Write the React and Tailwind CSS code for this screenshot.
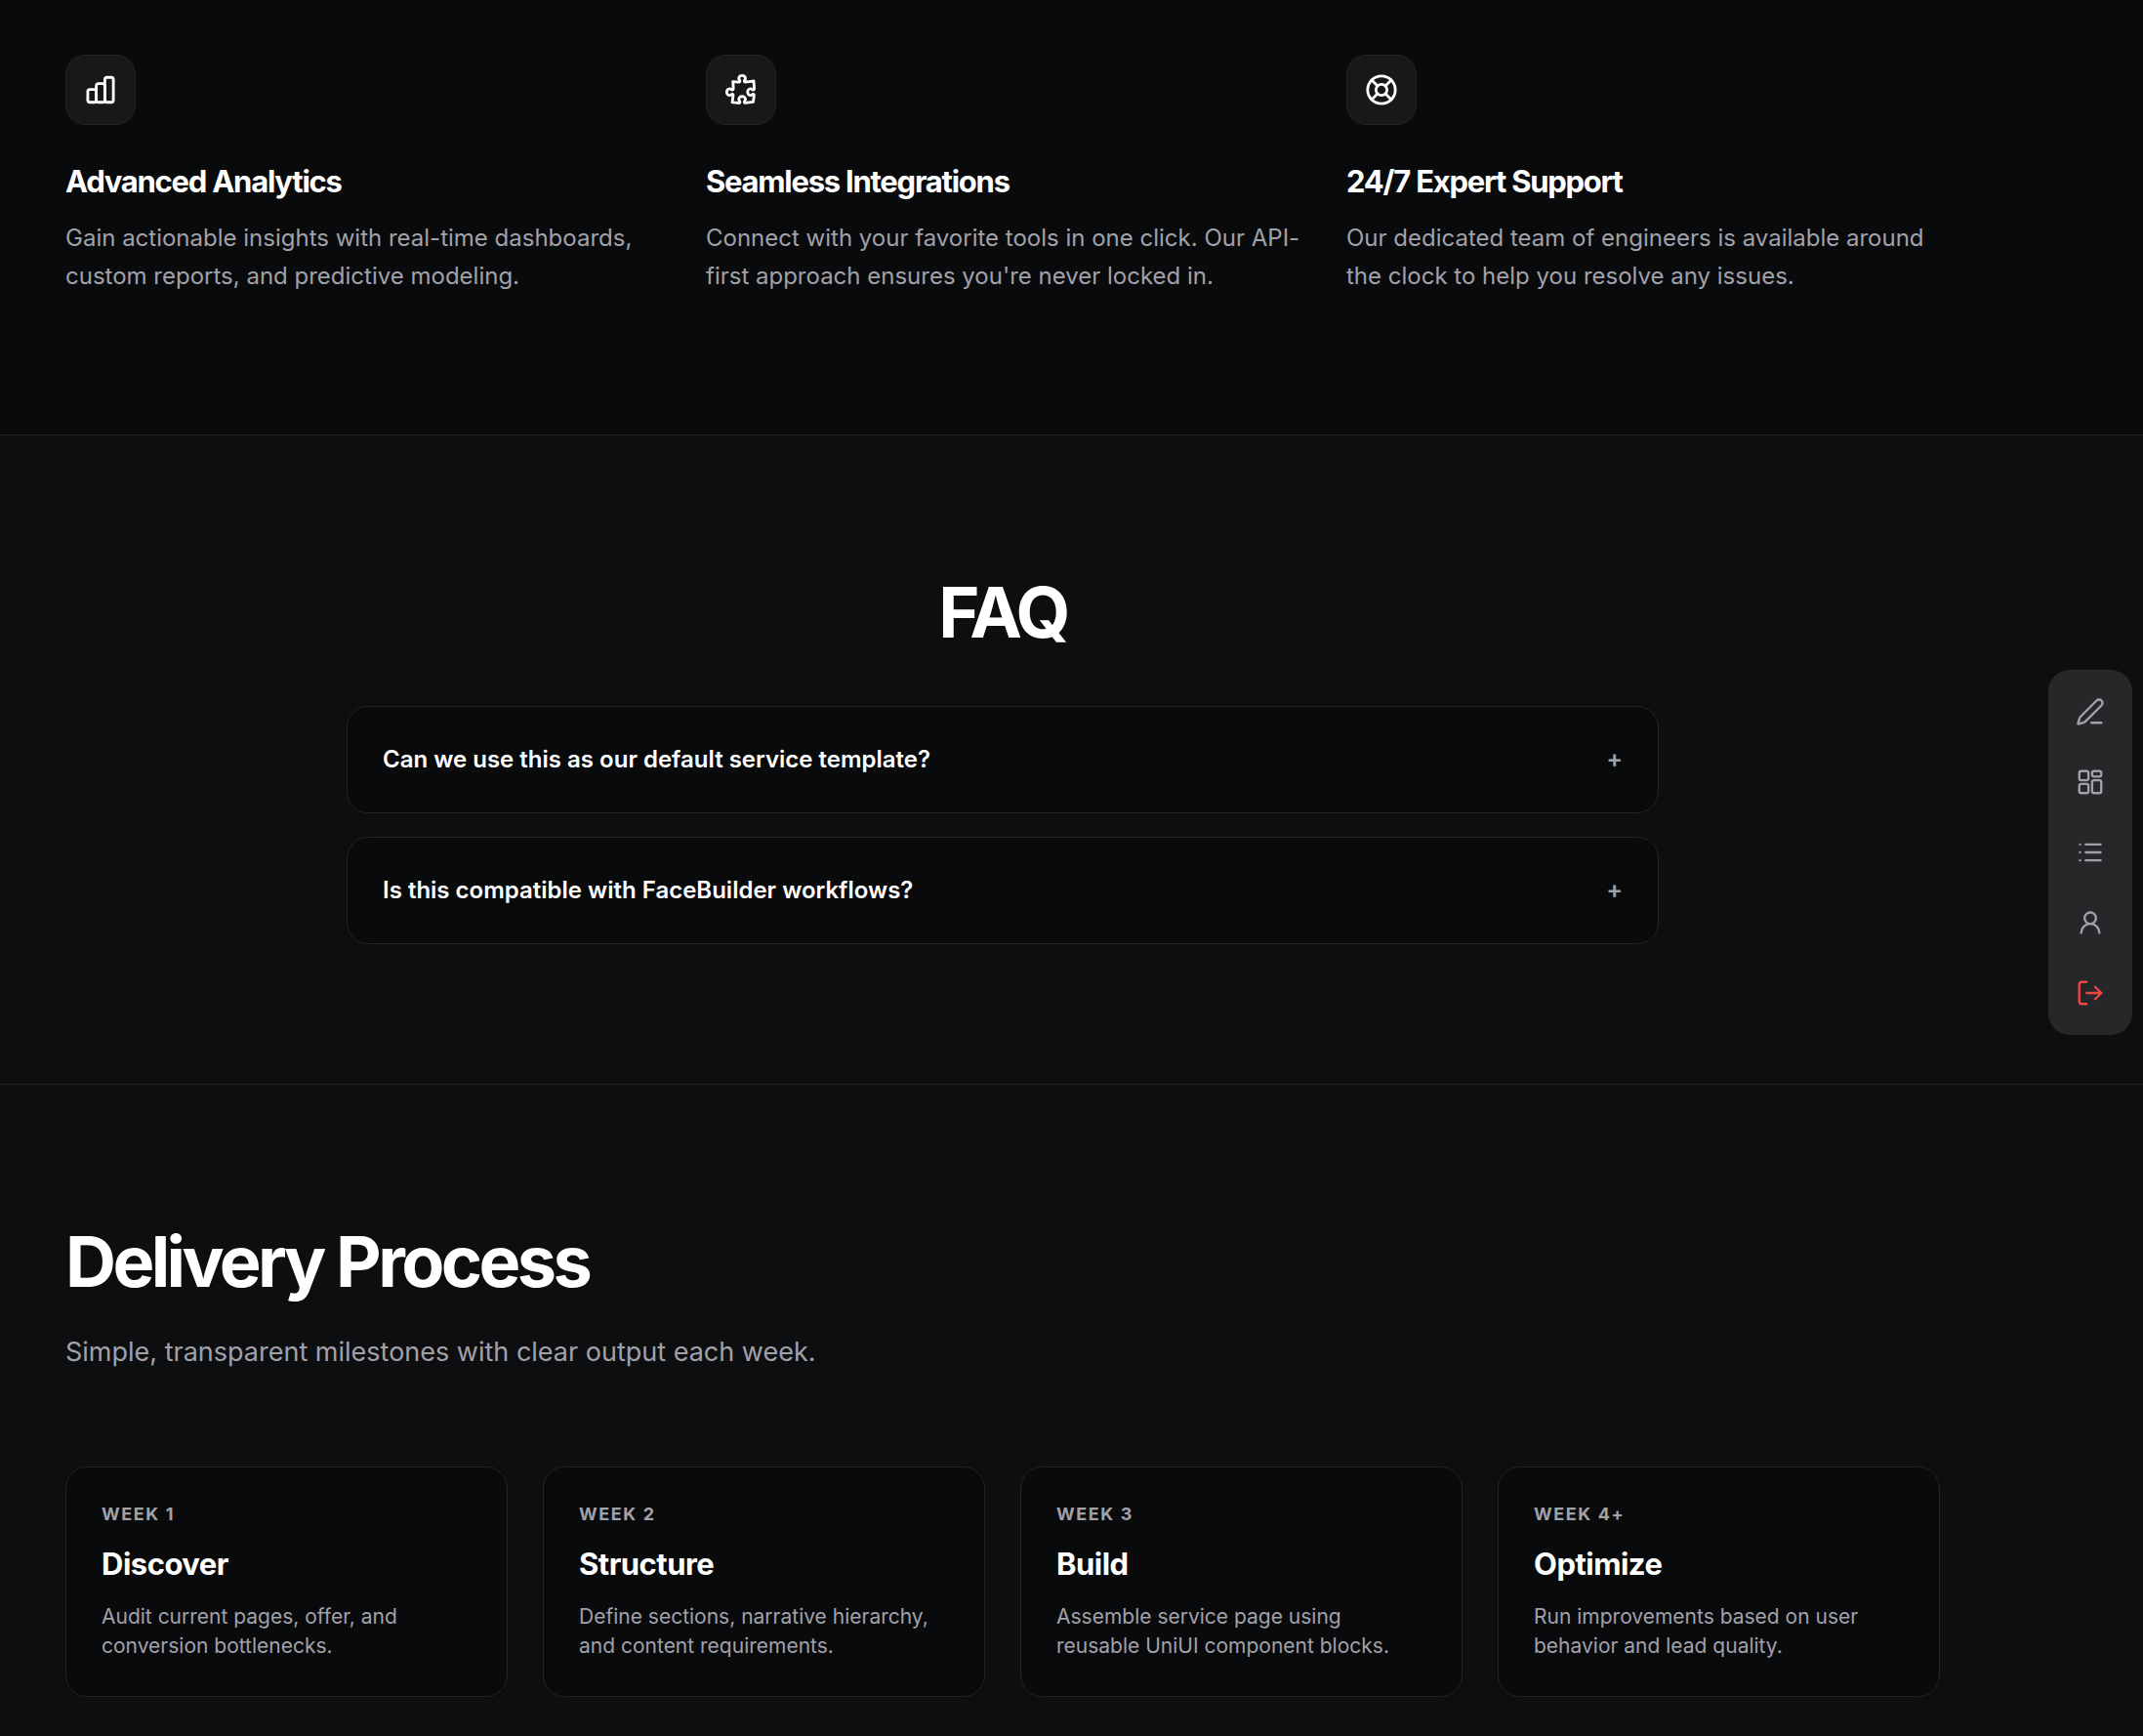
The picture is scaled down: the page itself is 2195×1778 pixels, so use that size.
import React from 'react';
import { LifeBuoy, List, LogOut, PenLine, UserRound } from 'lucide-react';
import { HiOutlinePuzzlePiece } from 'react-icons/hi2';

const BarsIcon = () => (
  <svg width="34" height="34" viewBox="0 0 24 24" fill="none" stroke="currentColor" strokeWidth="2">
    <rect x="2.75" y="11.7" width="6.15" height="9.3" rx="1.6" />
    <rect x="8.9" y="7.5" width="6.2" height="13.5" rx="1.6" />
    <rect x="15.1" y="3" width="6.15" height="18" rx="1.6" />
  </svg>
);

const WidgetsIcon = () => (
  <svg width="30" height="30" viewBox="0 0 24 24" fill="none" stroke="currentColor" strokeWidth="1.9">
    <rect x="3" y="3" width="7.5" height="7.5" rx="1.5" />
    <rect x="3" y="13.5" width="7.5" height="7.5" rx="1.5" />
    <rect x="13.5" y="3" width="7.5" height="4.5" rx="1.5" />
    <rect x="13.5" y="10.5" width="7.5" height="10.5" rx="1.5" />
  </svg>
);

const features = [
  {
    icon: <BarsIcon />,
    title: 'Advanced Analytics',
    text: 'Gain actionable insights with real-time dashboards, custom reports, and predictive modeling.',
  },
  {
    icon: <HiOutlinePuzzlePiece size={36} strokeWidth={1.9} />,
    title: 'Seamless Integrations',
    text: "Connect with your favorite tools in one click. Our API-first approach ensures you're never locked in.",
  },
  {
    icon: <LifeBuoy size={34} strokeWidth={2} />,
    title: '24/7 Expert Support',
    text: 'Our dedicated team of engineers is available around the clock to help you resolve any issues.',
  },
];

const faqs = [
  'Can we use this as our default service template?',
  'Is this compatible with FaceBuilder workflows?',
];

const steps = [
  { week: 'WEEK 1', title: 'Discover', text: 'Audit current pages, offer, and conversion bottlenecks.' },
  { week: 'WEEK 2', title: 'Structure', text: 'Define sections, narrative hierarchy, and content requirements.' },
  { week: 'WEEK 3', title: 'Build', text: 'Assemble service page using reusable UniUI component blocks.' },
  { week: 'WEEK 4+', title: 'Optimize', text: 'Run improvements based on user behavior and lead quality.' },
];

const dock = [
  { icon: <PenLine size={30} strokeWidth={1.9} />, color: 'text-[#a1a1aa]' },
  { icon: <WidgetsIcon />, color: 'text-[#a1a1aa]' },
  { icon: <List size={28} strokeWidth={2} />, color: 'text-[#a1a1aa]' },
  { icon: <UserRound size={28} strokeWidth={2} />, color: 'text-[#a1a1aa]' },
  { icon: <LogOut size={30} strokeWidth={1.9} />, color: 'text-[#ef4444]' },
];

const App = () => {
  return (
    <div className="relative h-[1778px] overflow-hidden bg-[#0d0e10] font-['Inter',sans-serif] text-white">
      {/* Features */}
      <section className="h-[446px] border-b border-[#222326] bg-[#090a0c] px-[67px] pt-[56px]">
        <div className="grid w-[1920px] grid-cols-3 gap-[48px]">
          {features.map((item) => (
            <div key={item.title}>
              <div className="flex h-[72px] w-[72px] items-center justify-center rounded-[20px] border border-[#222326] bg-[#18181b]">
                {item.icon}
              </div>
              <h3 className="mt-[35px] text-[31px] leading-[45px] font-bold tracking-[-1.25px]">
                {item.title}
              </h3>
              <p className="mt-[16px] w-[612px] text-[24px] leading-[39px] text-[#a1a1aa]">{item.text}</p>
            </div>
          ))}
        </div>
      </section>

      {/* FAQ */}
      <section className="h-[665px] border-b border-[#222326] px-[67px] pt-[139px]">
        <div className="w-[1920px]">
          <h2 className="text-center text-[72px] leading-[84px] font-bold tracking-[-3.6px]">FAQ</h2>
          <div className="mx-auto mt-[54px] flex w-[1344px] flex-col gap-[24px]">
            {faqs.map((q) => (
              <div
                key={q}
                className="flex h-[110px] items-center justify-between rounded-[22px] border border-[#222326] bg-[#090a0c] px-[36px]"
              >
                <span className="text-[24px] font-semibold">{q}</span>
                <span className="text-[25px] font-semibold text-[#a1a1aa]">+</span>
              </div>
            ))}
          </div>
        </div>
      </section>

      {/* Delivery process */}
      <section className="px-[67px] pt-[139px]">
        <h2 className="text-[72px] leading-[84px] font-bold tracking-[-3.6px]">Delivery Process</h2>
        <p className="mt-[30px] text-[27px] leading-[42px] text-[#a1a1aa]">
          Simple, transparent milestones with clear output each week.
        </p>
        <div className="mt-[96px] grid w-[1920px] grid-cols-4 gap-[36px]">
          {steps.map((step) => (
            <div key={step.week} className="h-[236px] rounded-[22px] border border-[#222326] bg-[#090a0c] px-[36px] pt-[34px]">
              <div className="text-[18px] leading-[28px] font-bold tracking-[1.6px] text-[#a1a1aa]">{step.week}</div>
              <h3 className="mt-[14px] text-[31px] leading-[45px] font-bold tracking-[-0.5px]">{step.title}</h3>
              <p className="mt-[16.5px] text-[21px] leading-[30.8px] text-[#a1a1aa]">{step.text}</p>
            </div>
          ))}
        </div>
      </section>

      {/* Floating dock */}
      <div className="absolute top-[686px] right-[11px] flex w-[86px] flex-col rounded-[22px] bg-[#27272a] py-[7px]">
        {dock.map((item, i) => (
          <div key={i} className={`flex h-[72px] items-center justify-center ${item.color}`}>
            {item.icon}
          </div>
        ))}
      </div>
    </div>
  );
};

export default App;
